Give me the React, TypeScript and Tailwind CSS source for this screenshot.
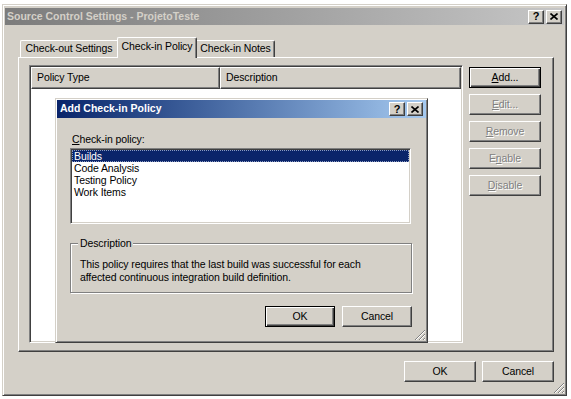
import React from 'react';

const raised =
  'border border-t-white border-l-white border-r-[#404040] border-b-[#404040] shadow-[inset_-1px_-1px_0_#808080]';
const sunken =
  'border border-t-[#808080] border-l-[#808080] border-r-white border-b-white shadow-[inset_1px_1px_0_#404040,inset_-1px_-1px_0_#d4d0c8]';

function Btn({
  children,
  w = 'w-[72px]',
  isDefault = false,
  disabled = false,
}: {
  children: React.ReactNode;
  w?: string;
  isDefault?: boolean;
  disabled?: boolean;
}) {
  const frame = isDefault
    ? 'border border-black shadow-[inset_1px_1px_0_#fff,inset_-1px_-1px_0_#404040,inset_-2px_-2px_0_#808080]'
    : raised;
  const text = disabled ? 'text-[#808080] [text-shadow:1px_1px_0_#fff]' : 'text-black';
  return (
    <div className={`${w} h-[21px] bg-[#d4d0c8] flex items-center justify-center ${frame} ${text}`}>
      {children}
    </div>
  );
}

function CaptionButtons({ gap = 'gap-[2px]' }: { gap?: string }) {
  return (
    <div className={`flex ${gap}`}>
      <div className={`w-[16px] h-[14px] bg-[#d4d0c8] ${raised} flex items-center justify-center`}>
        <span className="font-bold text-[11px] leading-none text-black">?</span>
      </div>
      <div className={`w-[16px] h-[14px] bg-[#d4d0c8] ${raised} flex items-center justify-center`}>
        <svg width="8" height="7" viewBox="0 0 8 7">
          <path d="M0.5 0.5 L7.5 6.5 M7.5 0.5 L0.5 6.5" stroke="#000" strokeWidth="1.6" />
        </svg>
      </div>
    </div>
  );
}

function Grip({ className }: { className: string }) {
  return (
    <svg className={className} width="12" height="12" viewBox="0 0 12 12">
      <path d="M11 1 L1 11 M11 5 L5 11 M11 9 L9 11" stroke="#808080" strokeWidth="1" />
      <path d="M11 2 L2 11 M11 6 L6 11 M11 10 L10 11" stroke="#ffffff" strokeWidth="1" />
    </svg>
  );
}

function AddPolicyDialog() {
  const items = ['Builds', 'Code Analysis', 'Testing Policy', 'Work Items'];
  return (
    <div
      className={`absolute left-[55px] top-[98px] w-[373px] h-[245px] bg-[#d4d0c8] p-[1px] border border-t-[#d4d0c8] border-l-[#d4d0c8] border-r-[#404040] border-b-[#404040] shadow-[inset_1px_1px_0_#fff,inset_-1px_-1px_0_#808080]`}
    >
      <div className="h-[18px] flex items-center justify-between pl-[3px] pr-[3px] bg-gradient-to-r from-[#0a246a] to-[#a6caf0]">
        <span className="font-bold text-[10.5px] tracking-normal text-white">Add Check-in Policy</span>
        <CaptionButtons />
      </div>
      <div className="pl-[13px] flex flex-col">
        <div className="mt-[15px] ml-[2px] h-[12px] leading-[12px]">
          <u className="underline-offset-[1px]">C</u>heck-in policy:
        </div>
        <div className={`mt-[3px] w-[341px] h-[76px] bg-white ${sunken} p-[1px]`}>
          {items.map((it, i) => (
            <div
              key={it}
              className={
                i === 0
                  ? 'h-[12px] leading-[10px] px-[1px] bg-[#0a246a] text-white border border-dotted border-[#8a9ac0]'
                  : 'h-[12px] leading-[12px] px-[2px]'
              }
            >
              {it}
            </div>
          ))}
        </div>
        <div className="relative mt-[19px] w-[342px] h-[50px] border border-[#808080] shadow-[inset_1px_1px_0_#fff,1px_1px_0_#fff] pl-[9px] pt-[14px]">
          <span className="absolute -top-[7px] left-[7px] px-[2px] bg-[#d4d0c8] leading-[12px]">Description</span>
          <div className="leading-[13px]">
            This policy requires that the last build was successful for each
            <br />
            affected continuous integration build definition.
          </div>
        </div>
        <div className="mt-[13px] w-[342px] flex justify-end gap-[7px]">
          <Btn w="w-[70px]" isDefault>
            OK
          </Btn>
          <Btn w="w-[70px]">Cancel</Btn>
        </div>
      </div>
      <Grip className="absolute right-[1px] bottom-[1px]" />
    </div>
  );
}

export default function App() {
  return (
    <div className="w-[571px] h-[399px] bg-white relative overflow-hidden pl-[2px] pt-[4px] font-['Liberation_Sans',Arial,sans-serif] text-[10.5px] tracking-[-0.1px] text-black">
      <div className="relative w-[565px] h-[392px] bg-[#d4d0c8] px-[2px] pt-[3px] border border-t-[#d4d0c8] border-l-[#d4d0c8] border-r-[#404040] border-b-[#404040] shadow-[inset_1px_1px_0_#fff,inset_-1px_-1px_0_#808080]">
        {/* inactive caption */}
        <div className="h-[17px] flex items-center justify-between pl-[2px] pr-[2px] bg-gradient-to-r from-[#7c7c7c] to-[#c6c6c6]">
          <span className="font-bold text-[10.5px] tracking-normal text-[#d4d0c8]">Source Control Settings - ProjetoTeste</span>
          <CaptionButtons />
        </div>

        <div className="ml-[13px] mr-[10px]">
          {/* tabs */}
          <div className="mt-[12px] h-[20px] pl-[2px] flex items-end">
            <div className="w-[97px] h-[17px] flex items-center justify-center border-t border-l border-t-white border-l-white rounded-tl-[2px]">
              Check-out Settings
            </div>
            <div className="relative z-10 w-[80px] h-[21px] -mb-[1px] pb-[3px] bg-[#d4d0c8] flex items-center justify-center border-t border-l border-r border-t-white border-l-white border-r-[#404040] shadow-[inset_-1px_0_0_#808080] rounded-t-[2px]">
              Check-in Policy
            </div>
            <div className="w-[78px] h-[17px] flex items-center justify-center border-t border-r border-t-white border-r-[#404040] shadow-[inset_-1px_0_0_#808080] rounded-tr-[2px]">
              Check-in Notes
            </div>
          </div>

          {/* tab page */}
          <div className={`w-[536px] h-[295px] flex pl-[10px] pt-[7px] ${raised}`}>
            <div className={`w-[434px] h-[278px] bg-white ${sunken} p-[1px]`}>
              <div className="h-[22px] flex">
                <div className={`w-[189px] h-full bg-[#d4d0c8] ${raised} flex items-center pl-[5px]`}>Policy Type</div>
                <div className={`flex-1 h-full bg-[#d4d0c8] ${raised} flex items-center pl-[5px]`}>Description</div>
              </div>
            </div>
            <div className="ml-[6px] mt-[2px] flex flex-col gap-[6px]">
              <Btn isDefault>
                <span>
                  <u className="underline-offset-[1px]">A</u>dd...
                </span>
              </Btn>
              <Btn disabled>
                <span>
                  <u className="underline-offset-[1px]">E</u>dit...
                </span>
              </Btn>
              <Btn disabled>
                <span>
                  <u className="underline-offset-[1px]">R</u>emove
                </span>
              </Btn>
              <Btn disabled>
                <span>
                  E<u className="underline-offset-[1px]">n</u>able
                </span>
              </Btn>
              <Btn disabled>
                <span>
                  <u className="underline-offset-[1px]">D</u>isable
                </span>
              </Btn>
            </div>
          </div>

          <div className="mt-[9px] flex justify-end gap-[6px]">
            <Btn>OK</Btn>
            <Btn>Cancel</Btn>
          </div>
        </div>

        <Grip className="absolute right-[1px] bottom-[1px]" />
      </div>

      <AddPolicyDialog />
    </div>
  );
}
